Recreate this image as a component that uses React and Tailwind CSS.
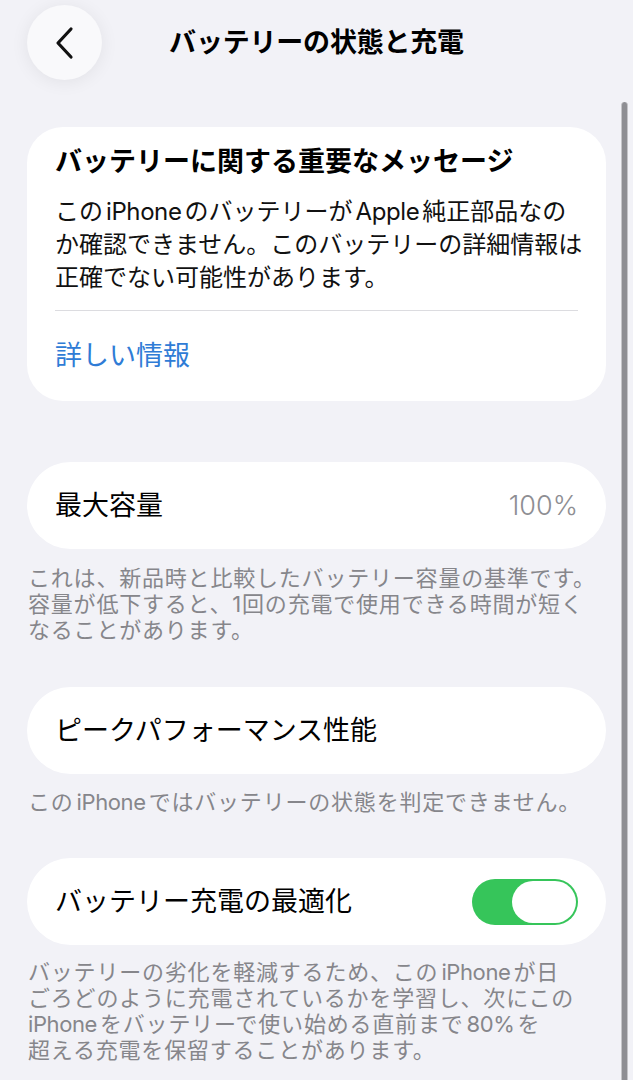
import React from "react";

const FONT = { fontFamily: '"Inter", "Noto Sans CJK JP", sans-serif' };

function L({ children }) {
  return <span className="mx-[3px] tracking-[-0.4px]">{children}</span>;
}

function Footnote({ lines, className = "" }) {
  return (
    <div className={"px-[28px] text-[22px] leading-[26px] tracking-[0.8px] text-[#86868b] " + className}>
      {lines.map((l, i) => (
        <div key={i} className="whitespace-nowrap">{l}</div>
      ))}
    </div>
  );
}

export default function App() {
  return (
    <div style={FONT} className="relative h-[1080px] w-full overflow-hidden bg-[#f2f2f7] text-black">
      {/* Header */}
      <div className="grid grid-cols-[1fr_auto_1fr] items-center pt-[5px]">
        <div className="pl-[27px]">
          <div className="flex h-[75px] w-[75px] items-center justify-center rounded-full bg-[#f9f9fb] shadow-[0_2px_18px_rgba(0,0,0,0.07)]">
            <svg width="22" height="34" viewBox="0 0 22 34" fill="none">
              <path d="M17 3 L4 17 L17 31" stroke="#111" strokeWidth="3.2" strokeLinecap="round" strokeLinejoin="round" />
            </svg>
          </div>
        </div>
        <div className="text-[27px] font-semibold leading-[34px] tracking-[-0.2px]">バッテリーの状態と充電</div>
        <div />
      </div>

      {/* Card 1 */}
      <div className="mx-[27px] mt-[47px] rounded-[36px] bg-white px-[28px] pt-[18px] pb-[28px]">
        <div className="whitespace-nowrap text-[27px] font-bold leading-[34px]">バッテリーに関する重要なメッセージ</div>
        <div className="mt-[16px] text-[24px] leading-[33px] text-[#111]">
          <div className="whitespace-nowrap">この<L>iPhone</L>のバッテリーが<L>Apple</L>純正部品なの</div>
          <div className="whitespace-nowrap">か確認できません。このバッテリーの詳細情報は</div>
          <div className="whitespace-nowrap">正確でない可能性があります。</div>
        </div>
        <div className="mt-[16px] h-px bg-[#dcdce0]" />
        <div className="mt-[28px] text-[27px] leading-[34px] text-[#2f7cd6]">詳しい情報</div>
      </div>

      {/* Card 2 */}
      <div className="mx-[27px] mt-[61px] flex h-[87px] items-center justify-between rounded-full bg-white px-[28px]">
        <div className="text-[27px] leading-[34px]">最大容量</div>
        <div className="text-[27px] font-light leading-[34px] text-[#8e8e93]">100%</div>
      </div>
      <Footnote
        className="mt-[16px]"
        lines={[
          "これは、新品時と比較したバッテリー容量の基準です。",
          "容量が低下すると、1回の充電で使用できる時間が短く",
          "なることがあります。",
        ]}
      />

      {/* Card 3 */}
      <div className="mx-[27px] mt-[44px] flex h-[87px] items-center rounded-full bg-white px-[28px]">
        <div className="text-[27px] leading-[34px]">ピークパフォーマンス性能</div>
      </div>
      <Footnote className="mt-[15px]" lines={[<>この<L>iPhone</L>ではバッテリーの状態を判定できません。</>]} />

      {/* Card 4 */}
      <div className="mx-[27px] mt-[43px] flex h-[87px] items-center justify-between rounded-full bg-white pl-[28px] pr-[28px]">
        <div className="text-[27px] leading-[34px]">バッテリー充電の最適化</div>
        <div className="relative h-[46px] w-[106px] rounded-full bg-[#36c55a]">
          <div className="absolute right-[2px] top-[2px] h-[42px] w-[64px] rounded-full bg-white" />
        </div>
      </div>
      <Footnote
        className="mt-[14px]"
        lines={[
          <>バッテリーの劣化を軽減するため、この<L>iPhone</L>が日</>,
          "ごろどのように充電されているかを学習し、次にこの",
          <><span className="mr-[3px] tracking-[-0.4px]">iPhone</span>をバッテリーで使い始める直前まで<L>80%</L>を</>,
          "超える充電を保留することがあります。",
        ]}
      />

      {/* Scroll indicator */}
      <div className="absolute left-[621px] top-[102px] z-10 h-[978px] w-[7px] rounded-t-full border-x border-[#c4c4c8] bg-[#8e8e93]" />
    </div>
  );
}
